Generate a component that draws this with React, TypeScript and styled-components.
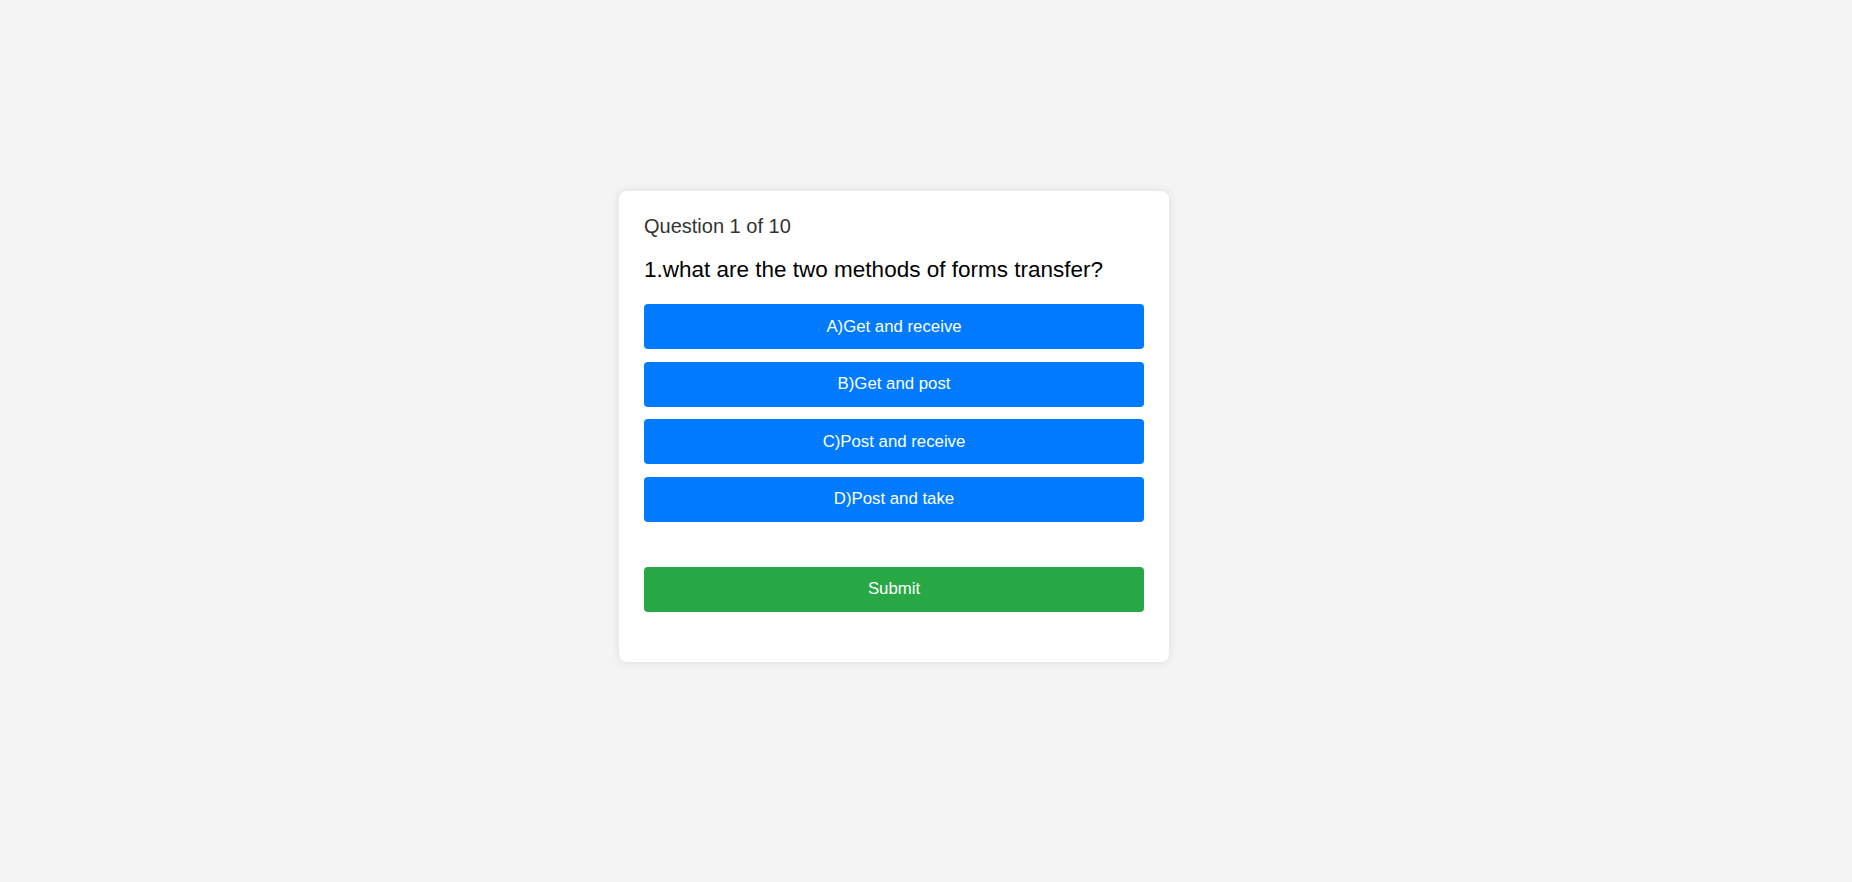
import React from "react";
import styled, { createGlobalStyle } from "styled-components";

const GlobalStyle = createGlobalStyle`
  html, body {
    margin: 0;
    padding: 0;
    background: #f4f4f4;
    font-family: "Liberation Sans", Arial, sans-serif;
  }
`;

const Page = styled.div`
  min-height: 882px;
  box-sizing: border-box;
  display: flex;
  align-items: flex-start;
  justify-content: center;
  padding: 191px 64px 0 0;
`;

const Card = styled.div`
  width: 550px;
  box-sizing: border-box;
  background: #ffffff;
  border-radius: 8px;
  box-shadow: 0 0 10px rgba(0, 0, 0, 0.1);
  padding: 24px 25px 50px;
  display: flex;
  flex-direction: column;
`;

const Count = styled.div`
  font-size: 20px;
  color: #333333;
  margin-bottom: 19px;
`;

const QuestionText = styled.div`
  font-size: 22.5px;
  color: #000000;
  margin-bottom: 21px;
`;

const Options = styled.div`
  display: flex;
  flex-direction: column;
  gap: 12.6px;
`;

const Btn = styled.button<{ $tone: "blue" | "green" }>`
  height: 45px;
  width: 100%;
  border: none;
  border-radius: 4px;
  background: ${(p) => (p.$tone === "green" ? "#28a745" : "#007bff")};
  color: #ffffff;
  font-family: "Liberation Sans", Arial, sans-serif;
  font-size: 16.8px;
  cursor: pointer;
  display: flex;
  align-items: center;
  justify-content: center;
  padding: 0;
`;

const SubmitRow = styled.div`
  margin-top: 45px;
  display: flex;
`;

const options = [
  "A)Get and receive",
  "B)Get and post",
  "C)Post and receive",
  "D)Post and take",
];

export default function App() {
  return (
    <>
      <GlobalStyle />
      <Page>
        <Card>
          <Count>Question 1 of 10</Count>
          <QuestionText>1.what are the two methods of forms transfer?</QuestionText>
          <Options>
            {options.map((o) => (
              <Btn key={o} $tone="blue">
                {o}
              </Btn>
            ))}
          </Options>
          <SubmitRow>
            <Btn $tone="green">Submit</Btn>
          </SubmitRow>
        </Card>
      </Page>
    </>
  );
}
